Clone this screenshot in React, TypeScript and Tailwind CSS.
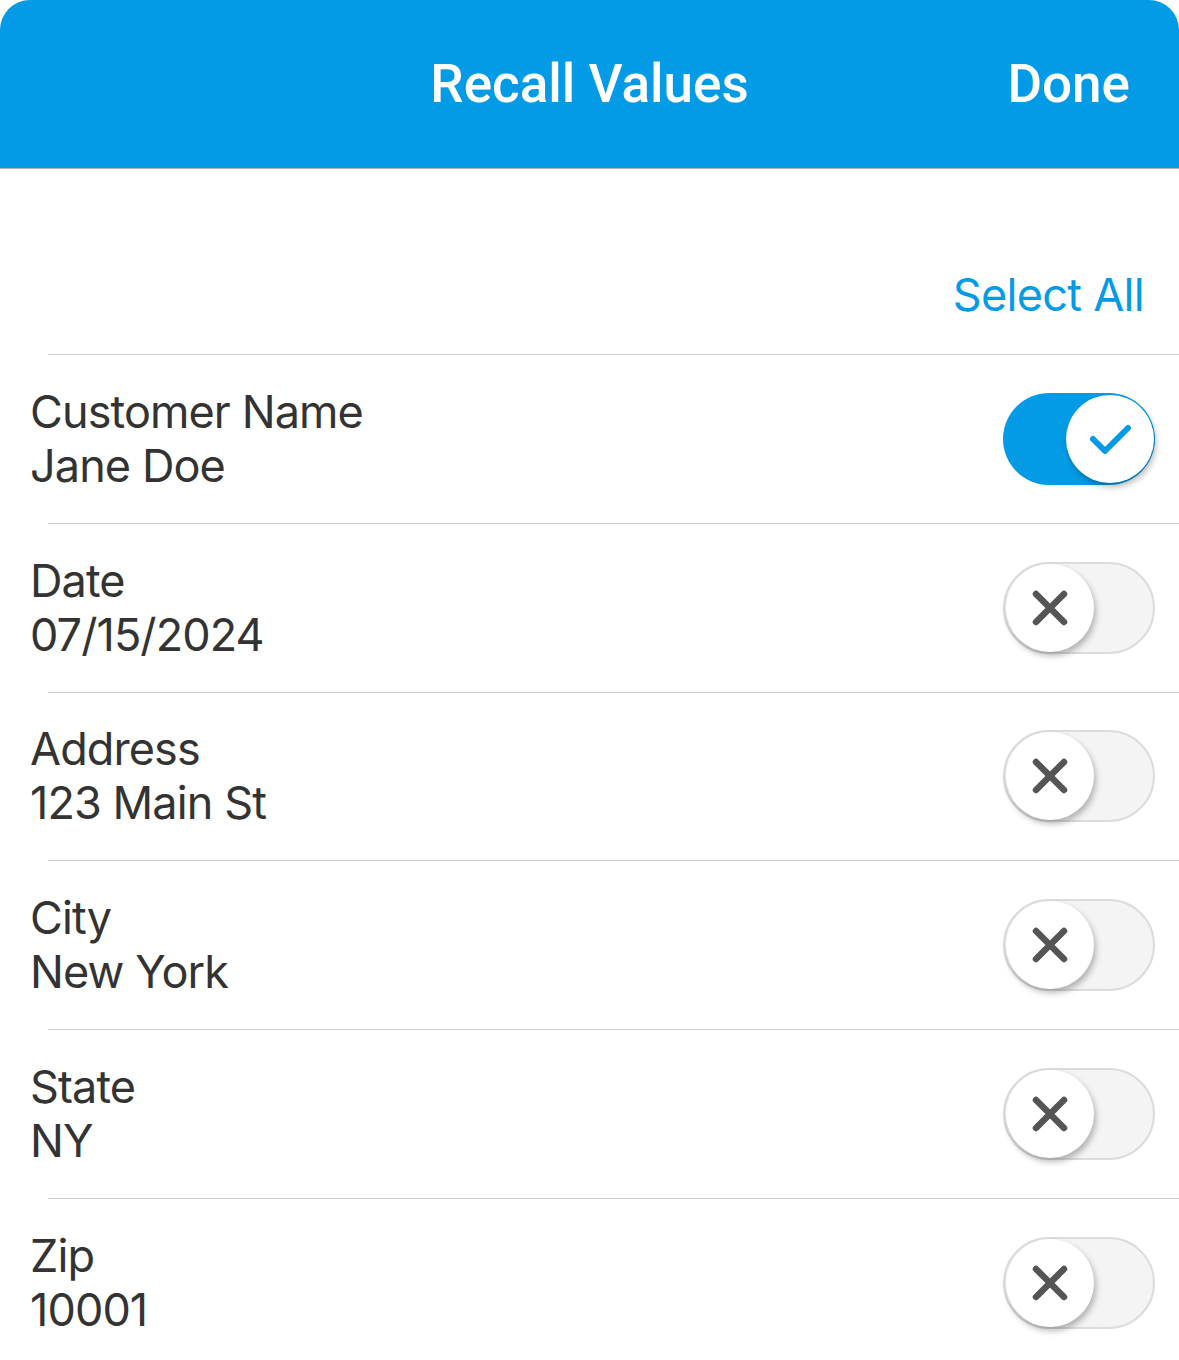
import { useState } from "react";

type Field = { label: string; value: string; on: boolean };

const initialFields: Field[] = [
  { label: "Customer Name", value: "Jane Doe", on: true },
  { label: "Date", value: "07/15/2024", on: false },
  { label: "Address", value: "123 Main St", on: false },
  { label: "City", value: "New York", on: false },
  { label: "State", value: "NY", on: false },
  { label: "Zip", value: "10001", on: false },
];

const Toggle = ({ on, onClick }: { on: boolean; onClick: () => void }) => (
  <button
    onClick={onClick}
    className={`shrink-0 w-[152px] h-[92px] rounded-full flex items-center px-[1px] box-border ${
      on ? "bg-[#039be5] justify-end" : "bg-[#f4f4f4] border-2 border-[#dcdcdc] justify-start"
    }`}
  >
    <span className="w-[88px] h-[88px] rounded-full bg-white flex items-center justify-center shadow-[2px_4px_6px_rgba(0,0,0,0.28)]">
      {on ? (
        <svg width="88" height="88" viewBox="0 0 88 88" fill="none">
          <path d="M27 44 L39 56 L62 33" stroke="#039be5" strokeWidth="6" strokeLinecap="round" strokeLinejoin="round" />
        </svg>
      ) : (
        <svg width="88" height="88" viewBox="0 0 88 88" fill="none">
          <path d="M30 30 L58 58 M58 30 L30 58" stroke="#555555" strokeWidth="6.5" strokeLinecap="round" />
        </svg>
      )}
    </span>
  </button>
);

export default function App() {
  const [fields, setFields] = useState(initialFields);

  const toggle = (i: number) =>
    setFields((f) => f.map((x, j) => (j === i ? { ...x, on: !x.on } : x)));

  return (
    <div className="w-[1179px] h-[1360px] overflow-hidden bg-white font-['Inter',sans-serif] text-[#333333]">
      {/* Header */}
      <div className="relative h-[169px] bg-[#039be5] rounded-t-[30px] border-b border-[#b4b4b4] flex items-center justify-center font-['Roboto',sans-serif] font-medium text-white">
        <span className="text-[53px] leading-none">Recall Values</span>
        <button className="absolute right-[49px] top-1/2 -translate-y-1/2 text-[53px] leading-none">Done</button>
      </div>

      {/* Select all */}
      <div className="h-[185px] flex items-end justify-end pr-[35px] pb-[32px]">
        <button className="text-[45px] leading-[54px] tracking-[-0.7px] text-[#039be5]">Select All</button>
      </div>

      {/* Rows */}
      {fields.map((f, i) => (
        <div key={f.label}>
          <div className="ml-[48px] h-px bg-[#cccccc]" />
          <div className="h-[167.8px] flex items-center justify-between pl-[30px] pr-[24px]">
            <div className="text-[45px] leading-[54px] tracking-[-0.9px]">
              <p>{f.label}</p>
              <p>{f.value}</p>
            </div>
            <Toggle on={f.on} onClick={() => toggle(i)} />
          </div>
        </div>
      ))}
    </div>
  );
}
